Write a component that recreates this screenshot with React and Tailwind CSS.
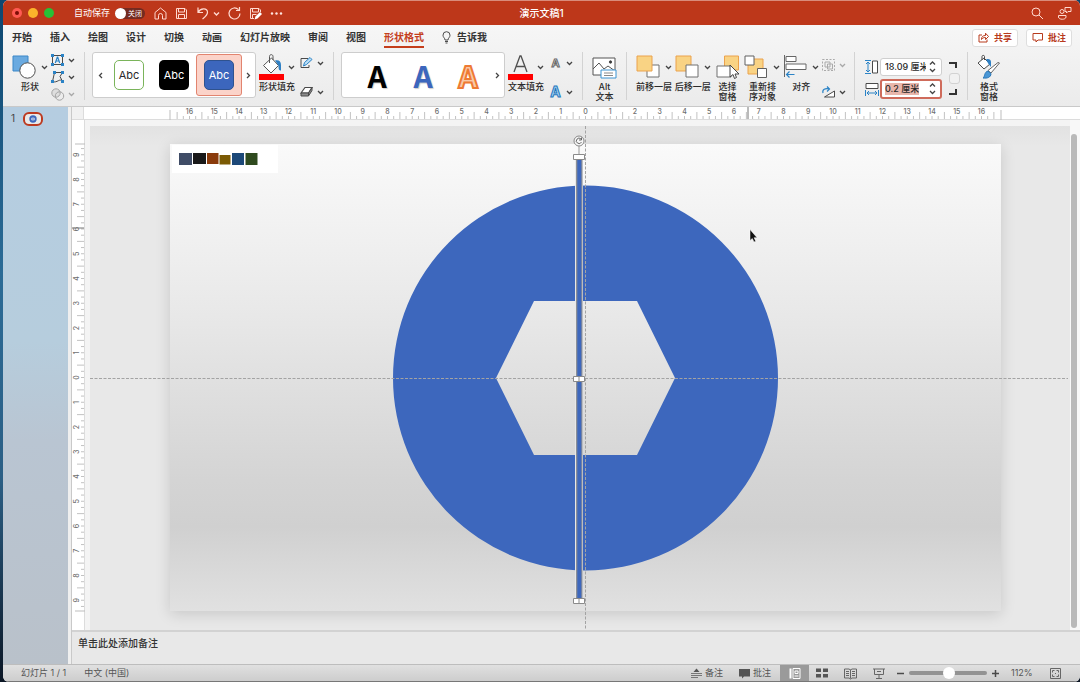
import { useState } from 'react'

const TABS = ['开始', '插入', '绘图', '设计', '切换', '动画', '幻灯片放映', '审阅', '视图', '形状格式']
const CM = 24.75

function Svg({ w, h, children, className = '' }) {
    return (
        <svg width={w} height={h} viewBox={`0 0 ${w} ${h}`} fill="none" stroke="#4a4a4a" strokeWidth="1" className={`shrink-0 overflow-visible ${className}`} aria-hidden="true">
            {children}
        </svg>
    )
}

function Chevron({ faded, dir = 'down' }) {
    const paths = { down: 'M1 2l2.5 2.5L6 2', left: 'M5 1L2.5 3.5 5 6', right: 'M2 1l2.5 2.5L2 6', up: 'M1 4.5L3.5 2 6 4.5' }
    return (
        <Svg w={7} h={7}>
            <path d={paths[dir]} stroke={faded ? '#a8a8a8' : '#444'} strokeWidth="1.3" />
        </Svg>
    )
}

function RibbonButton({ icon, label, chevron, narrow }) {
    return (
        <button className={`${narrow ? 'w-7' : 'w-9'} flex shrink-0 flex-col items-center text-[9px] leading-[10px] font-medium`}>
            <span className={`flex h-[30px] items-center ${chevron ? 'w-9 justify-between' : 'justify-center'}`}>
                {icon}
                {chevron && <Chevron />}
            </span>
            <span className="whitespace-pre">{label}</span>
        </button>
    )
}

function SmallButton({ icon, label, faded }) {
    return (
        <button aria-label={label} className="flex h-4 w-6 items-center justify-between">
            {icon}
            <Chevron faded={faded} />
        </button>
    )
}

function Divider() {
    return <div className="h-12 w-px shrink-0 bg-[#d3d3d3]" />
}

/* Title bar */
function TitleBar() {
    const [autoSave, setAutoSave] = useState(false)
    return (
        <header className="flex h-[25px] shrink-0 items-center border-t border-[#d98b7b] bg-[#bd371a] pr-[9px] pl-[9px] text-white">
            <div className="flex flex-1 items-center">
                <div className="flex gap-[6px]">
                    <button aria-label="关闭窗口" className="flex h-[10px] w-[10px] items-center justify-center rounded-full bg-[#ff5a52]">
                        <span className="h-1 w-1 rounded-full bg-[#7c0c06]" />
                    </button>
                    <button aria-label="最小化" className="h-[10px] w-[10px] rounded-full bg-[#fbb42b]" />
                    <button aria-label="缩放窗口" className="h-[10px] w-[10px] rounded-full bg-[#27c036]" />
                </div>
                <span className="ml-5 text-[9px]">自动保存</span>
                <button
                    role="switch"
                    aria-checked={autoSave}
                    aria-label="自动保存"
                    onClick={() => setAutoSave(!autoSave)}
                    className="ml-[5px] flex h-[11px] w-[30px] items-center gap-[2px] rounded-full bg-[#742b20] text-[7px] leading-[11px]"
                >
                    <span className="h-[11px] w-[11px] rounded-full bg-white" />
                    {autoSave ? '打开' : '关闭'}
                </button>
                <div className="ml-[9px] flex items-center gap-2">
                    <button aria-label="主页">
                        <Svg w={13} h={13}>
                            <path d="M1 5.5L6.5 1 12 5.5V12H8.5V8.5a2 2 0 0 0-4 0V12H1z" stroke="#ffd9d0" />
                        </Svg>
                    </button>
                    <button aria-label="保存">
                        <Svg w={13} h={13}>
                            <path d="M1.5 1.5h8.5l1.5 1.5v8.5h-10zM3.5 1.5v3.5h6v-3.5M3.5 11.5V7.5h6v4" stroke="#ffd9d0" />
                        </Svg>
                    </button>
                    <button aria-label="撤消" className="flex items-center gap-1">
                        <Svg w={13} h={13}>
                            <path d="M2 .5v5h5M2 5.5C4.5 1 11 .5 11.5 5c.2 3-2.5 5-5 7" stroke="#ffd9d0" strokeWidth="1.2" />
                        </Svg>
                        <Svg w={7} h={7}>
                            <path d="M1 2.5L3.5 5 6 2.5" stroke="#ffd9d0" strokeWidth="1.4" />
                        </Svg>
                    </button>
                    <button aria-label="重复">
                        <Svg w={13} h={13}>
                            <path d="M10.5 2.7A5.5 5.5 0 1 0 12 6.5M11.5 0v3.5H8" stroke="#ffd9d0" strokeWidth="1.2" />
                        </Svg>
                    </button>
                    <button aria-label="另存为">
                        <Svg w={13} h={13}>
                            <path d="M5 11.5H1.5v-10H10L11.5 3v2M3.5 1.5V5h6V1.5M3.5 11.5v-4h4" stroke="#ffd9d0" />
                            <path d="M5.5 12.5l1-3L11 5l2 2-4.5 4.5z" fill="#fff" stroke="none" />
                        </Svg>
                    </button>
                    <button aria-label="更多">
                        <Svg w={13} h={13}>
                            <g fill="#ffe6e0" stroke="none">
                                <circle cx="2" cy="6.5" r="1.2" />
                                <circle cx="6.5" cy="6.5" r="1.2" />
                                <circle cx="11" cy="6.5" r="1.2" />
                            </g>
                        </Svg>
                    </button>
                </div>
            </div>
            <h1 className="text-[10px] font-medium">演示文稿1</h1>
            <div className="flex flex-1 items-center justify-end gap-[14px]">
                <button aria-label="搜索">
                    <Svg w={13} h={13}>
                        <circle cx="5" cy="5" r="4" stroke="#ffd9d0" />
                        <path d="M8 8l4 4" stroke="#ffd9d0" />
                    </Svg>
                </button>
                <button aria-label="反馈">
                    <Svg w={13} h={13}>
                        <g stroke="#ffd9d0">
                            <circle cx="4" cy="4.5" r="2" />
                            <path d="M.5 8.5H8V10c0 3-7.500 3-7.500 0z" />
                            <path d="M7 .5h6v4h-3L8.5 6V4.5H7z" />
                        </g>
                    </Svg>
                </button>
            </div>
        </header>
    )
}

function Tabs() {
    return (
        <nav className="flex h-[25px] shrink-0 items-center pr-2 pl-[9px] text-[10px] font-bold text-[#333]">
            <div className="flex flex-1 items-center gap-[18px] whitespace-nowrap">
                {TABS.map((tab) => (
                    <button key={tab} className={`h-5 border-b-2 leading-4 ${tab === '形状格式' ? 'border-[#c43e1c] text-[#c43e1c]' : 'border-transparent'}`}>
                        {tab}
                    </button>
                ))}
                <button className="flex items-center gap-[6px]">
                    <Svg w={9} h={13}>
                        <path d="M3 9C3 7 1 6.5 1 4.2a3.5 3.5 0 0 1 7 0C8 6.5 6 7 6 9zM3 10.500h3M3.500 12h2" />
                    </Svg>
                    告诉我
                </button>
            </div>
            <div className="flex gap-2 text-[9px] text-[#b83b1d]">
                <button className="flex h-[18px] items-center gap-[5px] rounded-[3px] border border-[#dedede] bg-white px-[5px]">
                    <Svg w={11} h={11}>
                        <path d="M4 3H1v7h8V7.5M3.5 7.5C3.5 4.5 5 3.5 7.5 3.5V1.2L10.5 4.5l-3 3V5.5c-2 0-3 .5-4 2z" stroke="#b83b1d" />
                    </Svg>
                    共享
                </button>
                <button className="flex h-[18px] items-center gap-[5px] rounded-[3px] border border-[#dedede] bg-white px-[5px]">
                    <Svg w={11} h={11}>
                        <path d="M1 1.5h9.5V8H6l-2 2V8H1z" stroke="#b83b1d" />
                    </Svg>
                    批注
                </button>
            </div>
        </nav>
    )
}

/* Icons of the two fill buttons */
function BucketIcon() {
    return (
        <Svg w={25} h={27}>
            <path d="M4.5 11.5L12.5 4l7 7.5-7.5 7.5z" fill="#fff" stroke="#555" />
            <path d="M10.5 9V2.5c0-2.500 3.500-2.500 3.500 0V6" stroke="#555" />
            <path d="M16 6.5c4-1 6 1 6 4.500v5.500c-2 0-2.500-1-2.500-5z" fill="#2f80c4" stroke="none" />
            <path d="M0 20h25v6H0z" fill="#ff0000" stroke="none" />
        </Svg>
    )
}

function TextFillIcon() {
    return (
        <Svg w={25} h={27}>
            <path d="M6 18L12 2h1l6 16M8.5 12.5h8" stroke="#505050" strokeWidth="1.3" />
            <path d="M0 20h25v6H0z" fill="#ff0000" stroke="none" />
        </Svg>
    )
}

function ShapeGallery() {
    return (
        <div className="mx-[2px] flex h-[46px] w-[164px] shrink-0 items-center rounded-[3px] border border-[#cdcdcd] bg-white text-[11px]">
            <button aria-label="上一个样式" className="flex w-[14px] justify-center"><Chevron dir="left" /></button>
            <button className="ml-[7px] h-[30px] w-[30px] rounded-[5px] border border-[#7ab45a]">Abc</button>
            <button className="ml-[15px] h-[30px] w-[30px] rounded-[5px] bg-black text-white">Abc</button>
            <button className="ml-[7px] flex h-[42px] w-[46px] items-center justify-center rounded-[3px] border border-[#e2846f] bg-[#fbd3c9] text-white">
                <span className="flex h-[30px] w-[30px] items-center justify-center rounded-[5px] border border-[#2f528f] bg-[#3c66bd]">Abc</span>
            </button>
            <button aria-label="下一个样式" className="flex flex-1 justify-center"><Chevron dir="right" /></button>
        </div>
    )
}

function TextGallery() {
    return (
        <div className="mx-[2px] flex h-[46px] w-[164px] shrink-0 items-center rounded-[3px] border border-[#cdcdcd] bg-white pl-[12px] text-[30px] leading-[44px] font-bold [font-family:'Noto_Sans_CJK_SC',sans-serif]">
            <button className="w-[46px] text-black [text-shadow:1px_1px_1px_#ccc]">A</button>
            <button className="w-[46px] text-[#3c66bd] [text-shadow:1px_1px_1px_#ccc]">A</button>
            <button className="w-[44px] text-[#f9c9a8] [-webkit-text-stroke:2px_#ee7a33]">A</button>
            <button aria-label="下一个文本样式" className="flex flex-1 justify-center"><Chevron dir="right" /></button>
        </div>
    )
}

function SizeField({ id, label, value, active, icon }) {
    return (
        <div className="flex h-[22px] items-center gap-px">
            <label htmlFor={id} aria-label={label}>{icon}</label>
            <div className={`flex w-[62px] items-center rounded-[3px] bg-white ${active ? 'h-5 border-2 border-[#cf6b5b] pl-[3px]' : 'h-[18px] border border-[#cfcfcf] pl-1'}`}>
                <div className="flex w-[44px] items-center overflow-hidden">
                    <input id={id} defaultValue={value} className={`h-[12px] text-[9px] leading-3 font-medium outline-none ${active ? 'field-sizing-content bg-[#e9b6ab]' : 'w-[41px]'}`} />
                </div>
                <div className="flex flex-col items-center">
                    <button aria-label={label + '增加'}><Chevron dir="up" /></button>
                    <button aria-label={label + '减少'}><Chevron /></button>
                </div>
            </div>
        </div>
    )
}

function Ribbon() {
    return (
        <div className="flex h-[57px] shrink-0 items-start gap-[5px] overflow-hidden border-b border-[#c9c9c9] pt-[2px] pl-[9px]">
            <div className="flex w-[67px] shrink-0">
                <RibbonButton chevron label="形状" icon={
                    <Svg w={24} h={24}>
                        <path d="M1 1h15v15H1z" fill="#6aaae0" stroke="#3b87c8" />
                        <circle cx="15.5" cy="15.5" r="7.7" fill="#fff" stroke="#505050" />
                    </Svg>
                } />
                <div className="ml-[3px] flex flex-col gap-px">
                    <SmallButton label="文本框" icon={
                        <Svg w={13} h={12}>
                            <path d="M1.5 1.5h10v9h-10z" />
                            <path d="M4.3 9l2-6h.4l2 6M5 7h3" stroke="#2b83c6" strokeWidth="1.2" />
                            <path d="M0 0h3v3H0zM10 0h3v3h-3zM0 9h3v3H0zM10 9h3v3h-3z" fill="#2b83c6" stroke="none" />
                        </Svg>
                    } />
                    <SmallButton label="编辑形状" icon={
                        <Svg w={13} h={12}>
                            <path d="M3.5 1.5h8L9 5.5l2.5 5C8.5 6.5 6.5 12.5 1.5 10.5z" />
                            <path d="M2 0h3v3H2zM10 0h3v3h-3zM0 9h3v3H0zM10 9h3v3h-3z" fill="#2b83c6" stroke="none" />
                        </Svg>
                    } />
                    <SmallButton faded label="合并形状" icon={
                        <Svg w={13} h={12}>
                            <circle cx="5" cy="5" r="4.2" fill="#dedede" stroke="#a5a5a5" />
                            <circle cx="8.5" cy="8" r="4.2" stroke="#a5a5a5" />
                        </Svg>
                    } />
                </div>
            </div>
            <Divider />
            <ShapeGallery />
            <div className="-ml-[4px] flex w-[69px] shrink-0">
                <RibbonButton chevron label="形状填充" icon={<BucketIcon />} />
                <div className="ml-[5px] flex h-12 flex-col justify-between pt-[3px]">
                    <SmallButton label="形状轮廓" icon={
                        <Svg w={13} h={12}>
                            <path d="M8 1.5H1v9h8V8" />
                            <path d="M3.5 9l1-3.5L10 .5l2 2-5.500 5z" fill="#b9ddf5" stroke="#2b83c6" />
                        </Svg>
                    } />
                    <SmallButton label="形状效果" icon={
                        <Svg w={13} h={12}>
                            <path d="M1 7l4-5.500h7L8.500 7z" fill="#fff" strokeWidth="1.2" />
                            <path d="M1 7v3h7.500V7zM8.500 10L12 4.500v-3L8.500 7z" fill="#8d8d8d" />
                        </Svg>
                    } />
                </div>
            </div>
            <Divider />
            <TextGallery />
            <div className="-ml-[4px] flex w-[69px] shrink-0">
                <RibbonButton chevron label="文本填充" icon={<TextFillIcon />} />
                <div className="ml-[5px] flex h-12 flex-col justify-between pt-[3px] font-bold">
                    <SmallButton label="文本轮廓" icon={
                        <span className="w-[13px] text-[11px] leading-3 text-white [-webkit-text-stroke:1px_#666]">A</span>
                    } />
                    <SmallButton label="文本效果" icon={
                        <span className="w-[13px] text-[14px] leading-3 text-[#a9d2f3] [-webkit-text-stroke:1px_#2478bd]">A</span>
                    } />
                </div>
            </div>
            <Divider />
            <div className="flex w-[33px] shrink-0 justify-center">
                <RibbonButton narrow label={'Alt\n文本'} icon={
                    <Svg w={25} h={24}>
                        <path d="M1 3h22v17H1z" fill="#fff" stroke="#555" />
                        <path d="M1 14l6-6 5 6 4-3 7 5" stroke="#555" />
                        <circle cx="18.5" cy="7" r="1.2" fill="#333" />
                        <path d="M9 15h15v8H9z" fill="#fff" stroke="#3b93d2" />
                        <path d="M12 18h9M12 20.5h9" stroke="#888" />
                    </Svg>
                } />
            </div>
            <Divider />
            <div className="ml-[4px] flex w-[210px] shrink-0 justify-between">
                <RibbonButton chevron label="前移一层" icon={
                    <Svg w={24} h={24}>
                        <path d="M11 10h12v12H11z" fill="#fff" stroke="#707070" />
                        <path d="M1 1h15v15H1z" fill="#f9d384" stroke="#eba24c" />
                    </Svg>
                } />
                <RibbonButton chevron label="后移一层" icon={
                    <Svg w={24} h={24}>
                        <path d="M1 1h15v15H1z" fill="#f9d384" stroke="#eba24c" />
                        <path d="M11 10h12v12H11z" fill="#fff" stroke="#707070" />
                    </Svg>
                } />
                <RibbonButton narrow label={'选择\n窗格'} icon={
                    <Svg w={24} h={24}>
                        <path d="M8.5 1h14v14h-14z" fill="#f9d384" stroke="#eba24c" />
                        <path d="M1 11h14v11H1z" fill="#fff" stroke="#707070" />
                        <path d="M14 10v12l3-2.5 1.5 4 2-1-1.5-3.500h4z" fill="#fff" stroke="#444" />
                    </Svg>
                } />
                <RibbonButton chevron label={'重新排\n序对象'} icon={
                    <Svg w={24} h={24}>
                        <path d="M4 4h15v15H4z" fill="#f9d384" stroke="#eba24c" />
                        <path d="M1 1h9v9H1zM13.5 13.5h9v9h-9z" fill="#fff" stroke="#606060" />
                    </Svg>
                } />
                <RibbonButton chevron label="对齐" icon={
                    <Svg w={24} h={24}>
                        <path d="M1.5 0v22" stroke="#666" />
                        <path d="M3 1.5h10v5H3zM3 9h20v5.500H3z" fill="#fff" stroke="#666" />
                        <path d="M11.5 19.5h-8M6.500 16.500l-3 3 3 3" stroke="#2b83c6" strokeWidth="1.2" />
                    </Svg>
                } />
                <div className="flex h-12 flex-col justify-between pt-[5px]">
                    <SmallButton faded label="组合" icon={
                        <Svg w={13} h={12}>
                            <path d="M.5 .5h12v11H.5z" stroke="#aaa" strokeDasharray="2 1.5" />
                            <path d="M3 3h5v5H3zM5.5 5h5v5h-5z" stroke="#aaa" />
                        </Svg>
                    } />
                    <SmallButton label="旋转" icon={
                        <Svg w={13} h={12}>
                            <path d="M2.5 11L12.5 5v6z" fill="#fff" />
                            <path d="M1 7C0 3.5 3 2 7.500 3M5 .5L7.500 3 5 5.500" stroke="#2b83c6" strokeWidth="1.2" />
                        </Svg>
                    } />
                </div>
            </div>
            <div className="ml-[3px]"><Divider /></div>
            <div className="ml-[5px] flex w-[97px] shrink-0 items-center gap-[3px] pt-1">
                <div>
                    <SizeField id="shape-height" label="高度" value="18.09 厘米" icon={
                        <Svg w={14} h={14}>
                            <path d="M7.5 1h5v12h-5z" fill="#fff" />
                            <path d="M0 .5h6M0 13.5h6M3 2v10M1 4l2-2 2 2M1 10l2 2 2-2" stroke="#2b83c6" />
                        </Svg>
                    } />
                    <SizeField id="shape-width" label="宽度" value="0.2 厘米" active icon={
                        <Svg w={14} h={14}>
                            <path d="M1 1.5h12v5H1z" fill="#fff" />
                            <path d="M.5 8v6M13.5 8v6M2 11h10M4 9l-2 2 2 2M10 9l2 2-2 2" stroke="#2b83c6" />
                        </Svg>
                    } />
                </div>
                <div className="flex flex-col items-center gap-1">
                    <Svg w={8} h={7}><path d="M0 1h7v5" strokeWidth="2" stroke="#333" /></Svg>
                    <input type="checkbox" aria-label="锁定纵横比" className="ml-1 h-[11px] w-[11px] appearance-none rounded-[3px] border border-[#d2d2d2] bg-[#f1f1f1]" />
                    <Svg w={8} h={7}><path d="M0 6h7V1" strokeWidth="2" stroke="#333" /></Svg>
                </div>
            </div>
            <Divider />
            <div className="ml-[2px]">
                <RibbonButton narrow label={'格式\n窗格'} icon={
                    <Svg w={24} h={24}>
                        <path d="M1 8l6-5 6 6-6 5zM5 5V1.5c0-1.500 2.500-1.500 2.500 0V5" fill="#fff" />
                        <path d="M9 4.5c3-1 4.500 0 5 2V12l-2.500-3z" fill="#2f80c4" stroke="none" />
                        <path d="M22.5 8L14 18l-3-2.500L21 7.500z" fill="#fff" stroke="#666" />
                        <path d="M6 23c2-1 1-6 5-7l3 2.500c0 4-4 5-8 4.500z" fill="#4a97d6" stroke="#2674b5" />
                    </Svg>
                } />
            </div>
        </div>
    )
}

/* Ruler numbers sit on whole centimetres, long ticks on the halves */
function Ruler({ length, max, marker, vertical }) {
    const mid = length / 2
    const marks = []
    for (let q = -max * 4 - 2; q <= max * 4 + 2; q++) {
        const pos = mid + (q * CM) / 4
        if (pos > 0 && pos < length) marks.push({ q, pos })
    }
    return (
        <svg
            viewBox={vertical ? `0 0 12 ${length}` : `0 0 ${length} 12`}
            className={vertical ? 'block w-3 overflow-visible' : 'block w-full overflow-visible'}
            aria-hidden="true"
        >
            {marks.map(({ q, pos }) => {
                const start = q % 4 === 2 || q % 4 === -2 ? 5 : 9
                return (
                    <g key={q}>
                        {vertical
                            ? <path d={`M${start} ${pos}H12`} stroke="#c2c2c2" />
                            : <path d={`M${pos} ${start}V12`} stroke="#c2c2c2" />}
                        {q % 4 === 0 && (
                            <text
                                transform={vertical ? `translate(7 ${pos}) rotate(-90)` : `translate(${pos} 7)`}
                                textAnchor="middle"
                                className="fill-[#6e6e6e] text-[7px] font-medium"
                            >
                                {Math.abs(q / 4)}
                            </text>
                        )}
                    </g>
                )
            })}
            {vertical
                ? <path d={`M3 0H15M3 ${length}H15`} stroke="#bdbdbd" />
                : <path d={`M0 3V14M${length} 3V14`} stroke="#bdbdbd" />}
            {vertical
                ? <path d={`M0 ${marker}H12`} stroke="#777" />
                : <path d={`M${marker} 0V12`} stroke="#777" />}
        </svg>
    )
}

function Slide() {
    return (
        <svg
            viewBox="0 0 831 467"
            className="block w-full overflow-visible bg-[linear-gradient(#fafafa,#e9e9e9_35%,#d4d4d4_72%,#d0d0d0_82%,#e1e1e1)] shadow-[0_3px_14px_rgba(0,0,0,0.14)]"
            role="img"
            aria-label="幻灯片 1"
        >
            <path d="M2 1h106v28H2z" fill="#fff" />
            <path d="M9 9h13v12H9z" fill="#3f4c66" />
            <path d="M23 9h13v11H23z" fill="#191919" />
            <path d="M37 9h11.5v11H37z" fill="#8a3b0b" />
            <path d="M49.5 11h11v9.500h-11z" fill="#7b5a04" />
            <path d="M62 9h12v12H62z" fill="#1c4878" />
            <path d="M75.5 9h12v12h-12z" fill="#2f4a1e" />

            <path
                fillRule="evenodd"
                fill="#3d67bd"
                d="M223 234a192.5 192.5 0 1 1 385 0a192.5 192.5 0 1 1 -385 0zM326 234l38 77h103l38-77-38-77H364z"
            />

            {/* guides */}
            <g stroke="#a3a3a3" strokeWidth="1" strokeDasharray="3 1.5">
                <path d="M415.5 -18V486" />
                <path d="M-80 234.5H898" />
            </g>

            {/* selected bar */}
            <path d="M405 13h8v444h-8z" fill="#e8e8e8" />
            <path d="M406 13h6.5v444H406z" fill="#8b8f98" />
            <path d="M407.3 13h4v444h-4z" fill="#3d67bd" />
            <path d="M409 2v10" stroke="#999" />
            <circle cx="409" cy="-3" r="5" fill="#f7f7f7" stroke="#888" />
            <path d="M411 -5a2.7 2.7 0 1 0 .5 3M411.5 -6.5v2.500h-2.500" fill="none" stroke="#666" />
            <g fill="#fff" stroke="#8a8a8a">
                <path d="M403.5 10.5h11v5h-11z" />
                <path d="M403.5 232.5h11v5h-11zM409 232.5v5" />
                <path d="M403.5 454.5h11v5h-11zM409 454.5v5" />
            </g>

            <path d="M580 85.5v11l2.300-2 1.700 3.500 1.800-.8-1.700-3.500h3z" fill="#111" stroke="#fff" strokeWidth=".5" />
        </svg>
    )
}

function Workspace() {
    return (
        <main className="flex min-h-0 flex-1">
            <aside className="w-[65px] shrink-0 bg-[linear-gradient(#b5cde1,#b6cddd_42%,#b9c5d2_60%,#b9c1ca)] pt-1">
                <button className="flex items-center gap-2 pl-2 text-[10px] text-[#444]">
                    1
                    <span className="flex h-[14px] w-5 items-center justify-center rounded-[6px] border-2 border-[#bd3a20] bg-[#e9e9e9]">
                        <Svg w={8} h={8}>
                            <circle cx="4" cy="4" r="2.7" fill="#fff" stroke="#3d67bd" strokeWidth="2" />
                            <path d="M4 1v6" stroke="#3d67bd" />
                        </Svg>
                    </span>
                </button>
            </aside>
            <div className="w-1 shrink-0 border-r border-[#c9c9c9] bg-[#efefef]" />
            <div className="flex min-w-0 flex-1 flex-col">
                <div className="flex h-[13px] shrink-0 border-b border-[#dcdcdc] bg-white">
                    <div className="w-3 shrink-0 border-r border-[#dcdcdc] bg-[#f1f1f1]" />
                    <div className="min-w-0 flex-1 pr-[79px] pl-[86px]">
                        <Ruler length={831} max={16} marker={578} />
                    </div>
                </div>
                <div className="flex min-h-0 flex-1">
                    <div className="w-[13px] shrink-0 border-r border-[#dcdcdc] bg-white pt-6">
                        <Ruler length={467} max={9} marker={84} vertical />
                    </div>
                    <div className="min-w-0 flex-1 overflow-hidden bg-[#f4f4f4] pt-[6px] pl-[5px]">
                        <div className="h-full bg-[linear-gradient(#e2e2e2,#e8e8e8_20px)] pt-[18px] pr-[69px] pl-20">
                            <Slide />
                        </div>
                    </div>
                    <div className="w-[10px] shrink-0 bg-[#f8f8f8] pt-[14px] pr-[3px] pb-[2px] pl-px">
                        <div className="h-full rounded-full bg-[#b9b9b9]" />
                    </div>
                </div>
                <div className="h-[34px] shrink-0 border-t-2 border-[#d2d2d2] bg-[#e8e8e8] px-[6px] pt-[3px]">
                    <input aria-label="备注" placeholder="单击此处添加备注" className="block h-4 w-full bg-transparent text-[10px] leading-4 font-medium outline-none placeholder:text-[#333]" />
                </div>
            </div>
        </main>
    )
}

function StatusBar() {
    const [zoom, setZoom] = useState(112)
    return (
        <footer className="flex h-[18px] shrink-0 items-center border-t border-b border-t-[#bdbdbd] border-b-[#777] bg-[linear-gradient(#e0e0e0,#cdcdcd)] pr-[19px] pl-[18px] text-[9px] leading-4 whitespace-nowrap text-[#555]">
            <span>幻灯片 1 / 1</span>
            <button className="ml-[18px]">中文 (中国)</button>
            <div className="flex-1" />
            <button className="flex items-center gap-[3px]">
                <Svg w={11} h={11}>
                    <path d="M0 5.5h11M0 7.5h11M0 9.5h7" stroke="#777" />
                    <path d="M2.5 4L5.5 .5 8.5 4z" fill="#555" stroke="none" />
                </Svg>
                备注
            </button>
            <button className="ml-4 flex items-center gap-[3px]">
                <Svg w={11} h={11}>
                    <path d="M0 1h11v7.5H5l-2 2v-2H0z" fill="#555" stroke="none" />
                </Svg>
                批注
            </button>
            <button aria-label="普通视图" className="ml-[9px] flex h-4 w-[29px] items-center justify-center bg-[#9a9a9a]">
                <Svg w={12} h={11}>
                    <path d="M1.5 .5v10" stroke="#fff" strokeWidth="2" />
                    <path d="M4 .5h7v10H4zM6 3h3v2.500H6zM5.500 8h4" stroke="#fff" />
                </Svg>
            </button>
            <button aria-label="幻灯片浏览" className="ml-[7px]">
                <Svg w={12} h={10}>
                    <path d="M0 .5h5V4H0zM7 .5h5V4H7zM0 6h5v3.500H0zM7 6h5v3.500H7z" fill="#555" stroke="none" />
                </Svg>
            </button>
            <button aria-label="阅读视图" className="ml-4">
                <Svg w={13} h={11}>
                    <path d="M6.5 1.5v9M.5 1H5l1.500 1L8 1h4.500v9H8l-1.500 1L5 10H.5zM2 3.500h3M2 5.500h3M2 7.500h3M8 3.500h3M8 5.500h3M8 7.500h3" stroke="#666" />
                </Svg>
            </button>
            <button aria-label="幻灯片放映" className="ml-4">
                <Svg w={12} h={11}>
                    <path d="M0 1h12M1.5 1v5.500h9V1M6 6.500V10M3 10.500h6M4 3.500h4" stroke="#666" />
                </Svg>
            </button>
            <button aria-label="缩小" className="ml-3">
                <Svg w={7} h={7}><path d="M0 3.5h7" strokeWidth="1.5" /></Svg>
            </button>
            <input
                type="range"
                aria-label="显示比例"
                min="10"
                max="210"
                value={zoom}
                onChange={(e) => setZoom(Number(e.target.value))}
                className="mx-[5px] h-1 w-[78px] appearance-none rounded-full bg-[#939393] [&::-webkit-slider-thumb]:h-3 [&::-webkit-slider-thumb]:w-3 [&::-webkit-slider-thumb]:appearance-none [&::-webkit-slider-thumb]:rounded-full [&::-webkit-slider-thumb]:bg-white"
            />
            <button aria-label="放大">
                <Svg w={7} h={7}><path d="M0 3.5h7M3.5 0v7" strokeWidth="1.5" /></Svg>
            </button>
            <span className="ml-3 w-6">{zoom}%</span>
            <button aria-label="适应窗口" className="ml-[15px]">
                <Svg w={11} h={11}>
                    <path d="M.5 .5h10v10H.5z" stroke="#666" />
                    <path d="M2.5 4.5v-2h2M6.5 2.5h2v2M2.5 6.5v2h2M8.5 6.5v2h-2M5 5.5h1" stroke="#666" />
                </Svg>
            </button>
        </footer>
    )
}

export default function App() {
    return (
        <div className="h-screen bg-[linear-gradient(#0d4770,#2b6b96_40%,#2b5f85_70%,#0b1625)] pl-[3px] text-[#2a2a2a] [font-family:Inter,'Noto_Sans_CJK_SC',sans-serif]">
            <div className="flex h-full flex-col overflow-hidden rounded-[6px] bg-[linear-gradient(#f6f6f6_25px,#ebebeb_106px)]">
                <TitleBar />
                <Tabs />
                <Ribbon />
                <Workspace />
                <StatusBar />
            </div>
        </div>
    )
}
